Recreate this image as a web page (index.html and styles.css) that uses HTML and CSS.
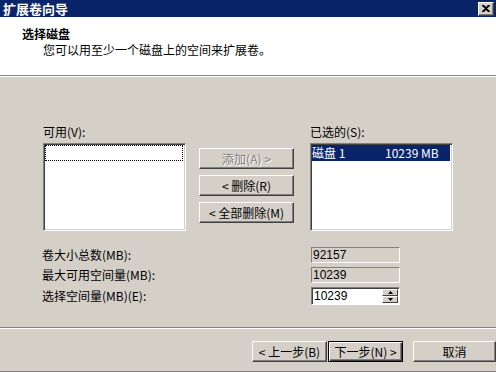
FILE: index.html
```html
<!DOCTYPE html>
<html lang="zh-CN">
<head>
    <meta charset="UTF-8">
    <title>扩展卷向导</title>
    <link rel="stylesheet" href="styles.css">
</head>
<body>
    <div class="window">
        <div class="titlebar">
            <span class="title">扩展卷向导</span>
            <span class="close-btn">
                <svg width="8" height="7" viewBox="0 0 8 7"><path d="M0 0h2l2 2 2-2h2v1L5 3.5 8 6v1H6L4 5 2 7H0V6l3-2.5L0 1z" fill="#000"/></svg>
            </span>
        </div>
        <div class="header">
            <h1>选择磁盘</h1>
            <p>您可以用至少一个磁盘上的空间来扩展卷。</p>
        </div>
        <div class="main">
            <div class="lists">
                <div class="list-col">
                    <label>可用(V):</label>
                    <div class="listbox">
                        <div class="focus-row"></div>
                    </div>
                </div>
                <div class="btn-col">
                    <button class="btn" disabled>添加(A) &gt;</button>
                    <button class="btn">&lt; 删除(R)</button>
                    <button class="btn">&lt; 全部删除(M)</button>
                </div>
                <div class="list-col">
                    <label>已选的(S):</label>
                    <div class="listbox">
                        <div class="sel-row"><span class="disk">磁盘 1</span><span>10239 MB</span></div>
                    </div>
                </div>
            </div>
            <div class="fields">
                <span class="field-label">卷大小总数(MB):</span>
                <span class="field readonly">92157</span>
                <span class="field-label">最大可用空间量(MB):</span>
                <span class="field readonly">10239</span>
                <span class="field-label">选择空间量(MB)(E):</span>
                <span class="field spin">
                    <span class="spin-value">10239</span>
                    <span class="spin-btns">
                        <span class="spin-btn"><svg width="5" height="3" viewBox="0 0 5 3"><path d="M2.5 0L5 3H0z" fill="#000"/></svg></span>
                        <span class="spin-btn"><svg width="5" height="3" viewBox="0 0 5 3"><path d="M0 0h5L2.5 3z" fill="#000"/></svg></span>
                    </span>
                </span>
            </div>
        </div>
        <div class="footer">
            <div class="nav">
                <button class="btn">&lt; 上一步(B)</button>
                <button class="btn default">下一步(N) &gt;</button>
            </div>
            <button class="btn">取消</button>
        </div>
    </div>
</body>
</html>
```

FILE: styles.css
```css
/* 基本 */
body {
    margin: 0;
    padding: 0;
    font-family: "SimSun", "Noto Sans CJK SC", sans-serif;
    font-size: 12px;
    color: #000;
    background-color: #d4d0c8;
}
.window {
    width: 496px;
    height: 372px;
    display: flex;
    flex-direction: column;
    background-color: #d4d0c8;
    box-sizing: border-box;
    border-bottom: 1px solid #808080;
}
.titlebar {
    height: 17px;
    background-color: #0a246a;
    display: flex;
    align-items: center;
    justify-content: space-between;
    padding: 0 2px 0 3px;
}
.title {
    color: #fff;
    font-weight: bold;
    font-size: 13px;
    line-height: 16px;
}
.close-btn {
    width: 16px;
    height: 14px;
    box-sizing: border-box;
    background-color: #d4d0c8;
    border: 1px solid;
    border-color: #fff #404040 #404040 #fff;
    box-shadow: inset -1px -1px #808080;
    display: flex;
    align-items: center;
    justify-content: center;
}
.header {
    height: 59px;
    background-color: #fff;
    border-bottom: 1px solid #808080;
    box-shadow: 0 1px #fff;
    box-sizing: border-box;
    padding: 10px 0 0 22px;
}
.header h1 {
    margin: 0;
    font-size: 12px;
    font-weight: bold;
    line-height: 14px;
}
.header p {
    margin: 2px 0 0 21px;
    line-height: 14px;
}
.main {
    flex: 1;
    padding: 49px 0 0 42px;
}
.lists {
    display: flex;
    align-items: flex-start;
}
.list-col {
    display: flex;
    flex-direction: column;
    gap: 4px;
}
.list-col:first-child {
    margin-left: 1px;
}
.list-col label {
    line-height: 14px;
}
.listbox {
    width: 143px;
    height: 88px;
    box-sizing: border-box;
    background-color: #fff;
    border: 1px solid;
    border-color: #808080 #fff #fff #808080;
    box-shadow: inset 1px 1px #404040, inset -1px -1px #d4d0c8;
    padding: 1px 2px 2px 1px;
}
.focus-row {
    height: 16px;
    box-sizing: border-box;
    border: 1px dotted #000;
}
.sel-row {
    height: 16px;
    background-color: #0a246a;
    color: #fff;
    display: flex;
    align-items: center;
    line-height: 14px;
}
.disk {
    width: 73px;
}
.btn-col {
    display: flex;
    flex-direction: column;
    gap: 6px;
    margin: 23px 16px 0 13px;
}
.btn {
    width: 95px;
    height: 21px;
    box-sizing: border-box;
    font-family: inherit;
    font-size: 12px;
    color: #000;
    background-color: #d4d0c8;
    border: 1px solid;
    border-color: #fff #404040 #404040 #fff;
    box-shadow: inset -1px -1px #808080;
    padding: 0;
    line-height: 14px;
}
.btn:disabled {
    color: #808080;
    text-shadow: 1px 1px #fff;
}
.fields {
    display: grid;
    grid-template-columns: 269px 89px;
    row-gap: 4px;
    margin-top: 16px;
    align-items: center;
}
.field-label {
    line-height: 14px;
}
.field {
    height: 16px;
    box-sizing: border-box;
    border: 1px solid;
    border-color: #808080 #fff #fff #808080;
    line-height: 14px;
    padding-left: 1px;
    font-family: "Liberation Sans", sans-serif;
}
.field.spin {
    height: 18px;
    background-color: #fff;
    box-shadow: inset 1px 1px #404040;
    display: flex;
    justify-content: space-between;
    padding: 1px 1px 1px 2px;
}
.spin-value {
    line-height: 14px;
}
.spin-btns {
    display: flex;
    flex-direction: column;
    width: 16px;
}
.spin-btn {
    flex: 1;
    background-color: #d4d0c8;
    box-sizing: border-box;
    border: 1px solid;
    border-color: #fff #404040 #404040 #fff;
    display: flex;
    align-items: center;
    justify-content: center;
}
.footer {
    height: 44px;
    border-top: 1px solid #808080;
    box-shadow: inset 0 1px #fff;
    display: flex;
    align-items: flex-start;
    padding: 13px 0 0 252px;
    box-sizing: border-box;
    gap: 10px;
}
.nav {
    display: flex;
    gap: 1px;
}
.nav .btn {
    width: 75px;
}
.btn.default {
    border: 1px solid #000;
    box-shadow: inset 1px 1px #fff, inset -1px -1px #404040, inset -2px -2px #808080;
}
```
